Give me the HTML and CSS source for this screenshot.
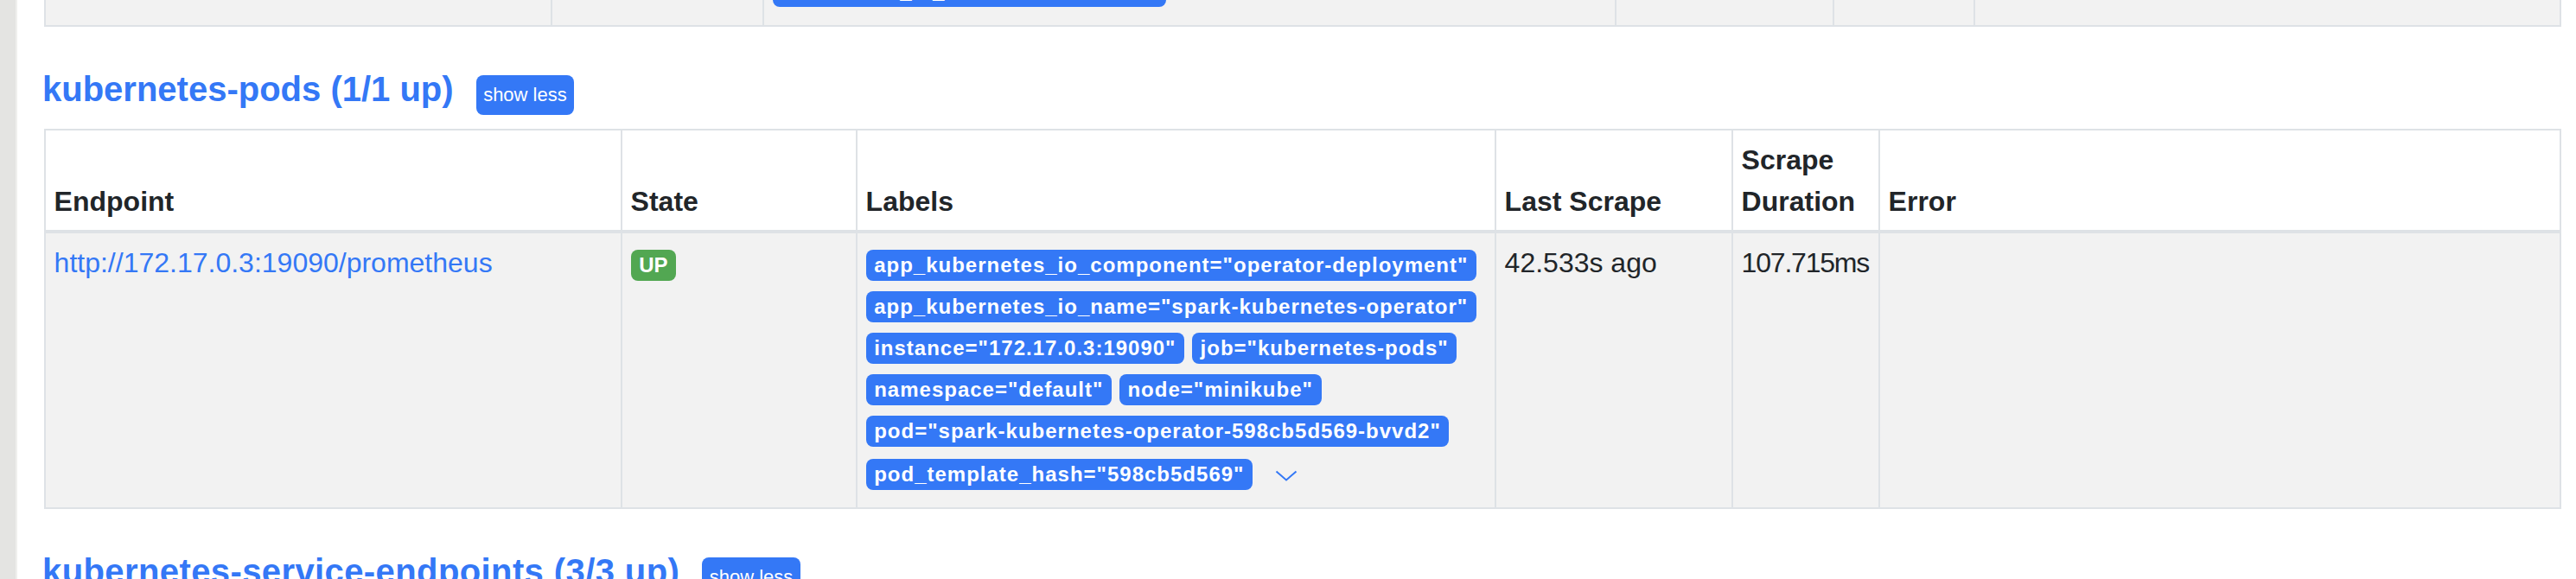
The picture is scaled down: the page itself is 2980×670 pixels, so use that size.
FILE: index.html
```html
<!DOCTYPE html>
<html lang="en">
<head>
<meta charset="utf-8">
<title>Targets</title>
<link rel="stylesheet" href="styles.css">
</head>
<body>
<div class="app">
  <div class="side"></div>
  <main class="main">
    <div class="prev-clip">
      <table class="targets prev">
        <colgroup><col class="p1"><col class="p2"><col class="p3"><col class="p4"><col class="p5"><col></colgroup>
        <tbody>
          <tr>
            <td></td>
            <td></td>
            <td class="labels"><span class="badge lbl">kubernetes_io_hostname="node-1"</span> <span class="expand" role="button"><svg width="26" height="13" viewBox="0 0 26 13"><path d="M1.5 1.5 L13 11.5 L24.5 1.5" fill="none" stroke="#3478f6" stroke-width="2"/></svg></span></td>
            <td></td>
            <td></td>
            <td></td>
          </tr>
        </tbody>
      </table>
    </div>

    <section class="pool">
      <div class="pool-head">
        <h2 class="pool-title"><a href="#kubernetes-pods">kubernetes-pods (1/1 up)</a></h2>
        <button class="toggle" type="button">show less</button>
      </div>
      <table class="targets">
        <colgroup><col class="c1"><col class="c2"><col class="c3"><col class="c4"><col class="c5"><col></colgroup>
        <thead>
          <tr>
            <th>Endpoint</th>
            <th>State</th>
            <th>Labels</th>
            <th>Last Scrape</th>
            <th>Scrape Duration</th>
            <th>Error</th>
          </tr>
        </thead>
        <tbody>
          <tr>
            <td><a class="ep" href="#">http://172.17.0.3:19090/prometheus</a></td>
            <td><span class="badge up">UP</span></td>
            <td class="labels"><span class="badge lbl">app_kubernetes_io_component="operator-deployment"</span> <span class="badge lbl">app_kubernetes_io_name="spark-kubernetes-operator"</span> <span class="badge lbl">instance="172.17.0.3:19090"</span> <span class="badge lbl">job="kubernetes-pods"</span> <span class="badge lbl">namespace="default"</span> <span class="badge lbl">node="minikube"</span> <span class="badge lbl">pod="spark-kubernetes-operator-598cb5d569-bvvd2"</span> <span class="badge lbl">pod_template_hash="598cb5d569"</span> <span class="expand" role="button"><svg width="26" height="13" viewBox="0 0 26 13"><path d="M1.5 1.5 L13 11.5 L24.5 1.5" fill="none" stroke="#3478f6" stroke-width="2"/></svg></span></td>
            <td>42.533s ago</td>
            <td class="dur">107.715ms</td>
            <td></td>
          </tr>
        </tbody>
      </table>
    </section>

    <section class="pool">
      <div class="pool-head">
        <h2 class="pool-title wide"><a href="#kubernetes-service-endpoints">kubernetes-service-endpoints (3/3 up)</a></h2>
        <button class="toggle" type="button">show less</button>
      </div>
      <table class="targets">
        <colgroup><col class="c1"><col class="c2"><col class="c3"><col class="c4"><col class="c5"><col></colgroup>
        <thead>
          <tr>
            <th>Endpoint</th>
            <th>State</th>
            <th>Labels</th>
            <th>Last Scrape</th>
            <th>Scrape Duration</th>
            <th>Error</th>
          </tr>
        </thead>
      </table>
    </section>
  </main>
</div>
</body>
</html>
```

FILE: styles.css
```css
html, body {
  margin: 0;
  height: 100%;
  overflow: hidden;
  background: #ffffff;
}

body {
  font-family: "Liberation Sans", Arial, Helvetica, sans-serif;
  font-size: 32px;
  line-height: 1.5;
  color: #212529;
}

.app {
  display: flex;
  min-height: 100%;
}

.side {
  flex: none;
  width: 18px;
  background: #e4e4e2;
  border-right: 2px solid #efefed;
}

.main {
  flex: 1;
  min-width: 0;
  padding: 0 17px 0 31px;
}

.prev-clip {
  height: 31px;
  overflow: hidden;
  display: flex;
  flex-direction: column;
  justify-content: flex-end;
}

.prev-clip .targets {
  flex: none;
  margin-top: 0;
}

.pool-head {
  display: flex;
  align-items: baseline;
  margin-top: 48px;
}

.pool-title {
  margin: 0 0 0 -2px;
  font-size: 40px;
  line-height: 48px;
  font-weight: 700;
}

.pool-title.wide {
  letter-spacing: 0.4px;
}

.pool-title a {
  color: #3478f6;
  text-decoration: none;
}

.toggle {
  margin-left: 26px;
  font-family: inherit;
  font-size: 22px;
  line-height: 30px;
  padding: 8px 8.5px;
  border: 0;
  border-radius: 8px;
  background: #3478f6;
  color: #ffffff;
}

.targets {
  width: 100%;
  table-layout: fixed;
  border-collapse: collapse;
  margin-top: 16px;
  border: 2px solid #dee2e6;
}

.targets th,
.targets td {
  border: 2px solid #dee2e6;
  padding: 9.6px;
  text-align: left;
}

.targets th {
  vertical-align: bottom;
  border-bottom-width: 4px;
  font-weight: 700;
  background: #ffffff;
}

.targets td {
  vertical-align: top;
  background: #f2f2f2;
}

.c1 { width: 667px; }
.c2 { width: 272px; }
.c3 { width: 739px; }
.c4 { width: 274px; }
.c5 { width: 170px; }

.p1 { width: 586px; }
.p2 { width: 245px; }
.p3 { width: 986px; }
.p4 { width: 252px; }
.p5 { width: 163px; }

.ep {
  color: #3478f6;
  text-decoration: none;
}

.dur {
  letter-spacing: -1.2px;
}

.badge {
  display: inline-block;
  font-size: 24px;
  font-weight: 700;
  line-height: 1;
  padding: 6px 9.6px;
  border-radius: 8px;
  color: #ffffff;
  white-space: nowrap;
}

.up {
  background: #52a752;
}

.lbl {
  background: #3478f6;
  letter-spacing: 1px;
}

.expand {
  display: inline-block;
  box-sizing: border-box;
  height: 58px;
  vertical-align: -21px;
  padding: 24px 8px 0;
  margin-left: 9px;
  cursor: pointer;
}

.expand svg {
  display: block;
}
```
